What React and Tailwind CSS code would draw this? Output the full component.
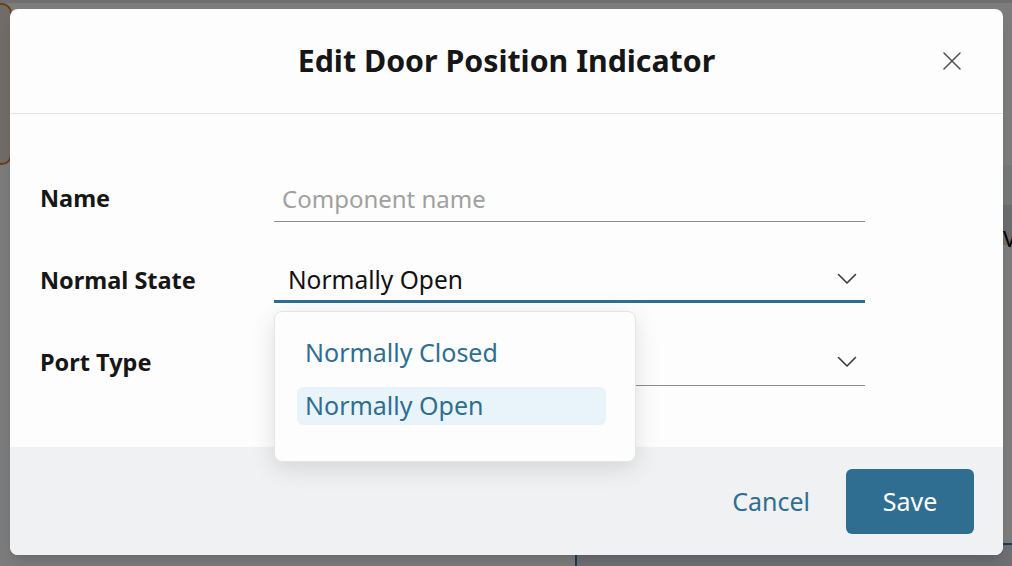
import React from 'react';

const font = { fontFamily: '"Noto Sans", sans-serif' };

const Chevron = () => (
  <svg width="20" height="12" viewBox="0 0 20 12" fill="none" className="text-[#3a3a3a]">
    <path d="M1.5 1.5 L10 10 L18.5 1.5" stroke="currentColor" strokeWidth="1.6" strokeLinecap="round" strokeLinejoin="round" />
  </svg>
);

export default function App() {
  return (
    <div className="relative h-[566px] w-[1012px] overflow-hidden bg-[#7b7c7b]" style={font}>
      {/* page behind the overlay */}
      <div className="flex h-full flex-col">
        <div className="h-[3px] bg-[#6e6f71]" />
        <div className="flex flex-1">
          <div className="ml-[-20px] h-[162px] w-[32px] rounded-r-[10px] border-2 border-[#6b3d12] bg-[#716c68]" />
          <div className="flex-1" />
          <div className="flex w-[9px] flex-col overflow-hidden pt-[162px]">
            <div className="h-[40px] bg-[#767777]" />
            <div className="h-[40px] bg-[#6a6c6e] pt-[22px] text-[22px] leading-none text-black">V</div>
          </div>
        </div>
        <div className="flex h-[23px]">
          <div className="w-[575px]" />
          <div className="flex-1 border-l-2 border-t-2 border-[#1d3b5c] bg-[#6d6f73]" />
        </div>
      </div>

      {/* modal */}
      <div className="absolute inset-0 pl-[10px] pt-[9px]">
        <div className="flex h-[546px] w-[993px] flex-col rounded-[8px] bg-[#fdfdfe] shadow-lg">
          <div className="relative flex h-[105px] shrink-0 items-center justify-center border-b border-[#e2e3e5]">
            <h1 className="text-[30.3px] font-bold text-[#161616]">Edit Door Position Indicator</h1>
            <button className="absolute right-[42px] top-[43px] text-[#555]">
              <svg width="18" height="18" viewBox="0 0 18 18" fill="none">
                <path d="M1 1 L17 17 M17 1 L1 17" stroke="currentColor" strokeWidth="1.6" strokeLinecap="round" />
              </svg>
            </button>
          </div>

          <div className="flex-1 pl-[30px] pt-[43px]">
            <div className="flex h-[82px] items-center">
              <label className="w-[234px] pt-[2px] text-[23.5px] font-bold text-[#161616]">Name</label>
              <div className="flex h-[48px] w-[591px] items-center border-b border-[#8e8e8e] pl-[8px]">
                <span className="pt-[2px] text-[24px] text-[#a0a0a0]">Component name</span>
              </div>
            </div>

            <div className="flex h-[82px] items-center">
              <label className="w-[234px] pt-[2px] text-[23.5px] font-bold text-[#161616]">Normal State</label>
              <div className="relative w-[591px]">
                <div className="flex h-[46px] items-center justify-between border-b-[3px] border-[#2f6e90] pl-[14px] pr-[8px]">
                  <span className="pt-[3px] text-[24.5px] text-[#111]">Normally Open</span>
                  <Chevron />
                </div>
                <div className="absolute left-0 top-[54px] z-10 w-[362px] rounded-[8px] border border-[#e3e4e6] bg-[#fdfdfe] pb-[36px] pl-[22px] pr-[29px] pt-[22px] shadow-[0_6px_24px_rgba(0,0,0,0.12)]">
                  <div className="flex h-[38px] items-center rounded-[6px] px-[8px] text-[25px] text-[#2f6e90]">Normally Closed</div>
                  <div className="mt-[15px] flex h-[38px] items-center rounded-[6px] bg-[#e8f4fa] px-[8px] text-[25px] text-[#2f6e90]">Normally Open</div>
                </div>
              </div>
            </div>

            <div className="flex h-[82px] items-center">
              <label className="w-[234px] pt-[2px] text-[23.5px] font-bold text-[#161616]">Port Type</label>
              <div className="flex h-[48px] w-[591px] items-center justify-end border-b border-[#8e8e8e] pr-[8px]">
                <Chevron />
              </div>
            </div>
          </div>

          <div className="flex h-[108px] shrink-0 items-center justify-end gap-[36px] rounded-b-[8px] bg-[#f0f1f3] pr-[29px]">
            <button className="pt-[1px] text-[25px] text-[#2f6e90]">Cancel</button>
            <button className="h-[65px] w-[128px] rounded-[6px] bg-[#306e91] pt-[1px] text-[25px] text-white">Save</button>
          </div>
        </div>
      </div>
    </div>
  );
}
